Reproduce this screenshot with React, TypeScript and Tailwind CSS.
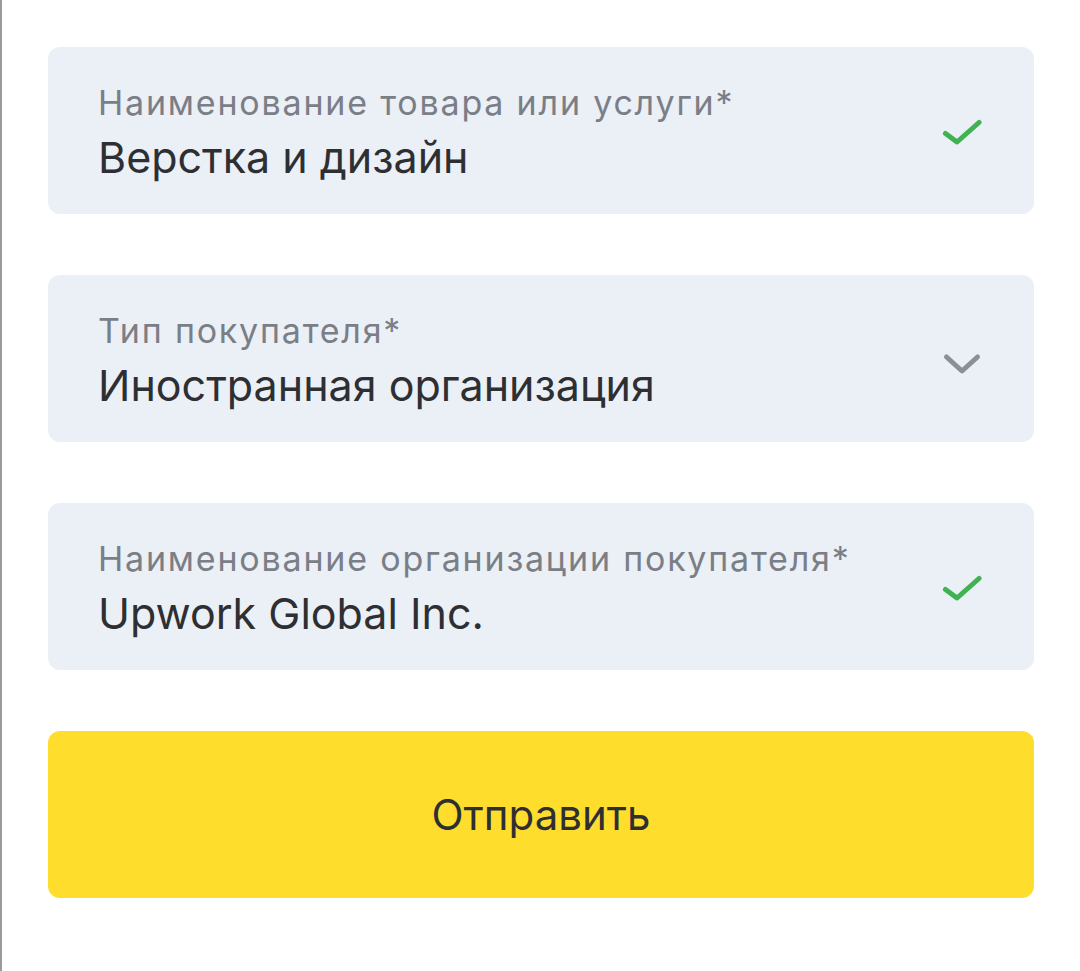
const font = { fontFamily: "Inter, 'Noto Sans', sans-serif" };

function Check() {
  return (
    <svg width="40" height="28" viewBox="0 0 40 28" fill="none">
      <path d="M3.5 16.5 L15 25 L37 5.5" stroke="#3fb34f" strokeWidth="5" strokeLinecap="round" strokeLinejoin="round" />
    </svg>
  );
}

function Chevron() {
  return (
    <svg width="40" height="28" viewBox="0 0 40 28" fill="none" className="mt-[5px]">
      <path d="M4.5 10 L20 24 L35.5 10" stroke="#8c8f96" strokeWidth="5" strokeLinecap="round" strokeLinejoin="round" />
    </svg>
  );
}

function Field({ label, value, icon }: { label: string; value: string; icon: "check" | "chevron" }) {
  return (
    <div className="flex h-[167px] items-center justify-between rounded-xl bg-[#ebeff6] pl-[50px] pr-[52px]">
      <div className="flex flex-col self-start pt-[36px]">
        <span className="text-[34px] leading-[40px] tracking-[1.8px] text-[#7a7e86]">{label}</span>
        <span className="pt-[10px] text-[43px] leading-[48px] text-[#2e2f33]">{value}</span>
      </div>
      {icon === "check" ? <Check /> : <Chevron />}
    </div>
  );
}

export default function App() {
  return (
    <main className="min-h-[971px] border-l-2 border-[#9a9a9a] bg-white" style={font}>
      <div className="flex w-[1032px] flex-col gap-[61px] pl-[46px] pt-[47px]">
        <Field label="Наименование товара или услуги*" value="Верстка и дизайн" icon="check" />
        <Field label="Тип покупателя*" value="Иностранная организация" icon="chevron" />
        <Field label="Наименование организации покупателя*" value="Upwork Global Inc." icon="check" />
        <button className="flex h-[167px] items-center justify-center rounded-xl bg-[#fedd2c] text-[42px] text-[#2e2f33]">
          Отправить
        </button>
      </div>
    </main>
  );
}
